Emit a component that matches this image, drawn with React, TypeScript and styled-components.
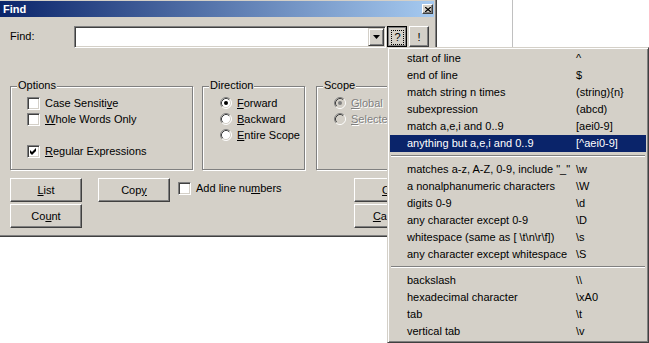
import React from "react";
import styled, { createGlobalStyle } from "styled-components";

const FACE = "#d4d0c8";
const SHADOW = "#808080";
const DARK = "#404040";
const HILITE = "#ffffff";
const FONT = `"Liberation Sans", Arial, sans-serif`;

const GlobalStyle = createGlobalStyle`
  html, body { margin: 0; padding: 0; background: #fff; }
  body { font-family: ${FONT}; font-size: 11px; color: #000; }
`;

const Screen = styled.div`
  position: relative;
  width: 649px;
  height: 343px;
  overflow: hidden;
  display: flex;
  align-items: flex-start;
  background: #fff;
`;

const Dialog = styled.div`
  box-sizing: border-box;
  flex: none;
  width: 437px;
  height: 237px;
  background: ${FACE};
  border-right: 1px solid ${DARK};
  border-bottom: 1px solid ${DARK};
  box-shadow: inset -1px -1px 0 ${SHADOW};
  padding: 1px 2px 0 0;
  display: flex;
  flex-direction: column;
`;

const TitleBar = styled.div`
  height: 16px;
  flex: none;
  display: flex;
  align-items: center;
  justify-content: space-between;
  padding: 0 1px 0 3px;
  background: linear-gradient(to right, #0a246a, #a6caf0);
`;

const Title = styled.span`
  color: #fff;
  font-weight: bold;
  font-size: 11px;
  line-height: 16px;
`;

const CloseButton = styled.span`
  box-sizing: border-box;
  width: 11px;
  height: 10px;
  display: flex;
  align-items: center;
  justify-content: center;
  background: ${FACE};
  border: 1px solid;
  border-color: ${HILITE} ${DARK} ${DARK} ${HILITE};
  box-shadow: inset -1px -1px 0 ${SHADOW};
`;

const Body = styled.div`
  flex: 1;
  padding: 9px 0 0 10px;
  display: flex;
  flex-direction: column;
`;

const FindRow = styled.div`
  display: flex;
  align-items: flex-start;
  height: 22px;
`;

const FieldLabel = styled.span`
  width: 64px;
  line-height: 21px;
`;

const Combo = styled.div`
  box-sizing: border-box;
  width: 312px;
  height: 22px;
  display: flex;
  justify-content: flex-end;
  background: #fff;
  border: 1px solid;
  border-color: ${SHADOW} ${HILITE} ${HILITE} ${SHADOW};
  box-shadow: inset 1px 1px 0 ${DARK}, inset -1px -1px 0 ${FACE};
  padding: 1px;
`;

const DropButton = styled.span`
  box-sizing: border-box;
  width: 16px;
  height: 18px;
  display: flex;
  align-items: center;
  justify-content: center;
  background: ${FACE};
  border: 1px solid;
  border-color: ${FACE} ${DARK} ${DARK} ${FACE};
  box-shadow: inset 1px 1px 0 ${HILITE}, inset -1px -1px 0 ${SHADOW};
`;

const ToolButton = styled.button<{ $pressed?: boolean; $ml: number }>`
  box-sizing: border-box;
  width: 20px;
  height: 21px;
  margin: 0 0 0 ${(p) => p.$ml}px;
  padding: ${(p) => (p.$pressed ? "1px 0 0 1px" : "0")};
  display: flex;
  align-items: center;
  justify-content: center;
  font-family: ${FONT};
  font-size: 11px;
  color: #000;
  background: ${FACE};
  border: 1px solid;
  border-color: ${(p) =>
    p.$pressed ? "#000" : `${HILITE} ${DARK} ${DARK} ${HILITE}`};
  box-shadow: ${(p) =>
    p.$pressed
      ? `inset 1px 1px 0 ${SHADOW}, inset -1px -1px 0 ${SHADOW}`
      : `inset -1px -1px 0 ${SHADOW}`};
`;

const FocusRing = styled.span`
  border: 1px dotted #000;
  padding: 0 2px;
  line-height: 13px;
`;

const GroupRow = styled.div`
  display: flex;
  margin-top: 38px;
`;

const Group = styled.div<{ $w: number; $ml: number }>`
  position: relative;
  box-sizing: border-box;
  flex: none;
  width: ${(p) => p.$w}px;
  height: 84px;
  margin-left: ${(p) => p.$ml}px;
  border: 1px solid ${SHADOW};
  box-shadow: inset 1px 1px 0 ${HILITE}, 1px 1px 0 ${HILITE};
  padding: 8px 0 0 16px;
  display: flex;
  flex-direction: column;
`;

const GroupLabel = styled.span`
  position: absolute;
  top: -8px;
  left: 6px;
  padding: 0 1px;
  line-height: 13px;
  background: ${FACE};
`;

const OptionRow = styled.label<{ $mt?: number }>`
  display: flex;
  align-items: center;
  gap: 5px;
  height: 16px;
  margin-top: ${(p) => p.$mt ?? 0}px;
  white-space: nowrap;
`;

const Box = styled.span`
  box-sizing: border-box;
  flex: none;
  width: 13px;
  height: 13px;
  display: flex;
  align-items: center;
  justify-content: center;
  background: #fff;
  border: 1px solid;
  border-color: ${SHADOW} ${HILITE} ${HILITE} ${SHADOW};
  box-shadow: inset 1px 1px 0 ${DARK}, inset -1px -1px 0 ${FACE};
`;

const RadioMark = styled.svg`
  flex: none;
  margin-left: 1px;
`;

const OptionText = styled.span<{ $disabled?: boolean }>`
  color: ${(p) => (p.$disabled ? SHADOW : "#000")};
  text-shadow: ${(p) => (p.$disabled ? `1px 1px 0 ${HILITE}` : "none")};
`;

const Key = styled.u`
  text-decoration: underline;
  text-underline-offset: 1px;
`;

const ActionGrid = styled.div`
  margin-top: 8px;
  display: grid;
  grid-template-columns: 88px 80px 176px 72px;
  grid-template-rows: 24px 24px;
  row-gap: 2px;
`;

const PushButton = styled.button<{ $col: number; $row: number }>`
  grid-column: ${(p) => p.$col};
  grid-row: ${(p) => p.$row};
  box-sizing: border-box;
  width: 72px;
  height: 24px;
  margin: 0;
  padding: 0;
  font-family: ${FONT};
  font-size: 11px;
  color: #000;
  background: ${FACE};
  border: 1px solid;
  border-color: ${HILITE} ${DARK} ${DARK} ${HILITE};
  box-shadow: inset -1px -1px 0 ${SHADOW};
  white-space: nowrap;
`;

const InlineCheck = styled(OptionRow)`
  grid-column: 3;
  grid-row: 1;
  align-self: start;
  margin-top: 2px;
`;

const Spacer = styled.div`
  flex: none;
  width: 75px;
`;

const RulerLine = styled.div`
  flex: none;
  width: 1px;
  align-self: stretch;
  background: #c0c0c0;
`;

const Menu = styled.div`
  position: absolute;
  left: 387px;
  top: 47px;
  width: 262px;
  height: 296px;
  box-sizing: border-box;
  background: ${FACE};
  border: 1px solid;
  border-color: ${FACE} ${DARK} ${DARK} ${FACE};
  box-shadow: inset 1px 1px 0 ${HILITE}, inset -1px -1px 0 ${SHADOW};
  padding: 2px;
`;

const MenuItem = styled.div<{ $active?: boolean }>`
  display: grid;
  grid-template-columns: 169px 1fr;
  padding-left: 17px;
  height: 17px;
  line-height: 17px;
  white-space: nowrap;
  background: ${(p) => (p.$active ? "#0a246a" : "transparent")};
  color: ${(p) => (p.$active ? "#fff" : "#000")};
`;

const MenuSeparator = styled.div`
  height: 0;
  margin: 3px 1px 4px;
  border-top: 1px solid ${SHADOW};
  border-bottom: 1px solid ${HILITE};
`;

type Entry = { label: string; code: string; active?: boolean } | "sep";

const entries: Entry[] = [
  { label: "start of line", code: "^" },
  { label: "end of line", code: "$" },
  { label: "match string n times", code: "(string){n}" },
  { label: "subexpression", code: "(abcd)" },
  { label: "match a,e,i and 0..9", code: "[aei0-9]" },
  { label: "anything but a,e,i and 0..9", code: "[^aei0-9]", active: true },
  "sep",
  { label: 'matches a-z, A-Z, 0-9, include "_"', code: "\\w" },
  { label: "a nonalphanumeric characters", code: "\\W" },
  { label: "digits 0-9", code: "\\d" },
  { label: "any character except 0-9", code: "\\D" },
  { label: "whitespace (same as [ \\t\\n\\r\\f])", code: "\\s" },
  { label: "any character except whitespace", code: "\\S" },
  "sep",
  { label: "backslash", code: "\\\\" },
  { label: "hexadecimal character", code: "\\xA0" },
  { label: "tab", code: "\\t" },
  { label: "vertical tab", code: "\\v" },
];

const CheckMark = () => (
  <svg width="7" height="7" viewBox="0 0 7 7">
    <polygon points="0,2 2,4 6,0 6,3 2,7 0,5" fill="#000" />
  </svg>
);

const Radio = ({ checked, disabled }: { checked?: boolean; disabled?: boolean }) => (
  <RadioMark width="12" height="12" viewBox="0 0 12 12">
    <circle cx="6" cy="6" r="5" fill={disabled ? FACE : "#fff"} />
    <path d="M2.11 9.89 A5.5 5.5 0 0 1 9.89 2.11" fill="none" stroke={SHADOW} />
    <path d="M9.89 2.11 A5.5 5.5 0 0 1 2.11 9.89" fill="none" stroke={HILITE} />
    <path d="M2.82 9.18 A4.5 4.5 0 0 1 9.18 2.82" fill="none" stroke={DARK} />
    <path d="M9.18 2.82 A4.5 4.5 0 0 1 2.82 9.18" fill="none" stroke={FACE} />
    {checked && <circle cx="6" cy="6" r="2" fill={disabled ? SHADOW : "#000"} />}
  </RadioMark>
);

const Check = ({ checked }: { checked?: boolean }) => (
  <Box>{checked && <CheckMark />}</Box>
);

export default function App() {
  return (
    <>
      <GlobalStyle />
      <Screen>
        <Dialog>
          <TitleBar>
            <Title>Find</Title>
            <CloseButton>
              <svg width="6" height="5" viewBox="0 0 6 5">
                <path d="M0 0 L6 5 M6 0 L0 5" stroke="#000" strokeWidth="1.3" />
              </svg>
            </CloseButton>
          </TitleBar>
          <Body>
            <FindRow>
              <FieldLabel>Find:</FieldLabel>
              <Combo>
                <DropButton>
                  <svg width="7" height="4" viewBox="0 0 7 4">
                    <polygon points="0,0 7,0 3.5,4" fill="#000" />
                  </svg>
                </DropButton>
              </Combo>
              <ToolButton $pressed $ml={1}>
                <FocusRing>?</FocusRing>
              </ToolButton>
              <ToolButton $ml={2}>!</ToolButton>
            </FindRow>

            <GroupRow>
              <Group $w={183} $ml={0}>
                <GroupLabel>Options</GroupLabel>
                <OptionRow>
                  <Check />
                  <OptionText>
                    Case Sensiti<Key>v</Key>e
                  </OptionText>
                </OptionRow>
                <OptionRow>
                  <Check />
                  <OptionText>
                    <Key>W</Key>hole Words Only
                  </OptionText>
                </OptionRow>
                <OptionRow $mt={16}>
                  <Check checked />
                  <OptionText>
                    <Key>R</Key>egular Expressions
                  </OptionText>
                </OptionRow>
              </Group>
              <Group $w={103} $ml={9}>
                <GroupLabel>Direction</GroupLabel>
                <OptionRow>
                  <Radio checked />
                  <OptionText>
                    <Key>F</Key>orward
                  </OptionText>
                </OptionRow>
                <OptionRow>
                  <Radio />
                  <OptionText>
                    <Key>B</Key>ackward
                  </OptionText>
                </OptionRow>
                <OptionRow>
                  <Radio />
                  <OptionText>
                    <Key>E</Key>ntire Scope
                  </OptionText>
                </OptionRow>
              </Group>
              <Group $w={110} $ml={11}>
                <GroupLabel>Scope</GroupLabel>
                <OptionRow>
                  <Radio checked disabled />
                  <OptionText $disabled>
                    <Key>G</Key>lobal
                  </OptionText>
                </OptionRow>
                <OptionRow>
                  <Radio disabled />
                  <OptionText $disabled>
                    <Key>S</Key>elected Text
                  </OptionText>
                </OptionRow>
              </Group>
            </GroupRow>

            <ActionGrid>
              <PushButton $col={1} $row={1}>
                <Key>L</Key>ist
              </PushButton>
              <PushButton $col={2} $row={1}>
                Cop<Key>y</Key>
              </PushButton>
              <InlineCheck>
                <Check />
                <OptionText>
                  Add line nu<Key>m</Key>bers
                </OptionText>
              </InlineCheck>
              <PushButton $col={4} $row={1}>
                <Key>O</Key>K
              </PushButton>
              <PushButton $col={1} $row={2}>
                Co<Key>u</Key>nt
              </PushButton>
              <PushButton $col={4} $row={2}>
                <Key>C</Key>ancel
              </PushButton>
            </ActionGrid>
          </Body>
        </Dialog>
        <Spacer />
        <RulerLine />

        <Menu>
          {entries.map((e, i) =>
            e === "sep" ? (
              <MenuSeparator key={i} />
            ) : (
              <MenuItem key={i} $active={e.active}>
                <span>{e.label}</span>
                <span>{e.code}</span>
              </MenuItem>
            )
          )}
        </Menu>
      </Screen>
    </>
  );
}
